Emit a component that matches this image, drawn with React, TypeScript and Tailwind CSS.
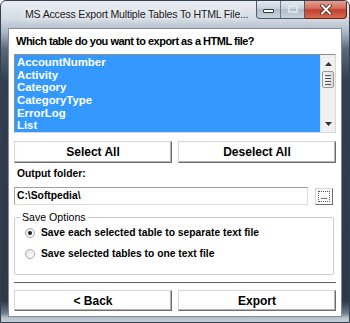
const tables = ["AccountNumber", "Activity", "Category", "CategoryType", "ErrorLog", "List"];

const font = "font-['Liberation_Sans',Arial,sans-serif]";

const WinButton = ({ label, className = "" }: { label: string; className?: string }) => (
  <button
    className={`flex items-center justify-center bg-white border border-[#d6d6d6] border-r-[#6e6e6e] border-b-[#6e6e6e] shadow-[inset_-1px_-1px_0_#b4b4b4] text-[12px] font-bold text-black ${className}`}
  >
    {label}
  </button>
);

const Radio = ({ checked, label }: { checked?: boolean; label: string }) => (
  <div className="flex items-center h-[14px]">
    <span className="ml-[10px] flex h-[10px] w-[10px] items-center justify-center rounded-full border border-[#a9a9a9] bg-gradient-to-br from-[#e6e6e6] to-white">
      {checked && <span className="h-[4px] w-[4px] rounded-full bg-[#222]" />}
    </span>
    <span className="ml-[6px] text-[10.3px] font-bold text-black">{label}</span>
  </div>
);

export default function App() {
  return (
    <div
      className={`${font} relative h-[323px] w-[350px] overflow-hidden rounded-t-[6px] border border-[#34404f] bg-[linear-gradient(to_bottom,#e9eef3_0px,#d3dbe4_18px,#a9b5c3_32px,#5a687a_48px,#323e4d_80px,#2d3947_300px,#6d7a8a_312px,#b9c3ce_317px,#c9d1da_323px)]`}
    >
      {/* title bar */}
      <div className="flex h-[27px] items-start">
        <div className="whitespace-nowrap pl-[24px] pt-[6px] text-[10.6px] tracking-[-0.2px] text-[#1b1b1b] [text-shadow:0_0_6px_#fff,0_0_10px_#fff]">
          MS Access Export Multiple Tables To HTML File...
        </div>
        <div className="ml-auto mr-[2px] flex h-[19px] -mt-px">
          <div className="flex rounded-bl-[4px] border border-t-0 border-[#4d5a6a] bg-[linear-gradient(to_bottom,#e7ecf1,#c6d0db_50%,#aebbc9_51%,#c9d3dd)]">
            <div className="flex w-[24px] items-end justify-center border-r border-[#6d7a8a] pb-[5px]">
              <div className="h-[4px] w-[11px] rounded-[1px] border border-[#303a46] bg-white" />
            </div>
            <div className="flex w-[23px] items-center justify-center">
              <div className="h-[8px] w-[10px] border-[2px] border-[#e4e9ee] opacity-80" />
            </div>
          </div>
          <div className="flex w-[42px] items-center justify-center rounded-br-[4px] border border-l-0 border-t-0 border-[#6b1d17] bg-[linear-gradient(to_bottom,#e8a597,#d3705f_45%,#c2402f_55%,#d66a4f)]">
            <svg width="12" height="11" viewBox="0 0 12 11">
              <path d="M2 1.5 L10 9.5 M10 1.5 L2 9.5" stroke="#3a1510" strokeWidth="3.4" strokeLinecap="square" />
              <path d="M2 1.5 L10 9.5 M10 1.5 L2 9.5" stroke="#fff" strokeWidth="2" strokeLinecap="square" />
            </svg>
          </div>
        </div>
      </div>

      {/* client area */}
      <div className="mx-[7px] h-[289px] border border-[#7f8d9d] bg-white px-[5px]">
        <div className="mt-[5px] h-[14px] whitespace-nowrap pl-[2px] text-[11px] font-bold leading-[14px] tracking-[-0.5px] text-black">
          Which table do you want to export as a HTML file?
        </div>

        <div className="mt-[6px] flex h-[79px] border border-[#8e8e8e] border-r-[#d8d8d8] border-b-[#d8d8d8]">
          <div className="flex-1 bg-[#3399ff] pt-[1px] pl-[2px]">
            {tables.map((t) => (
              <div key={t} className="h-[12.7px] text-[11.4px] font-bold leading-[12.7px] text-white">
                {t}
              </div>
            ))}
          </div>
          <div className="relative w-[15px] bg-[#f0f0f0] border-l border-[#e4e4e4]">
            <svg className="absolute left-[4px] top-[7px]" width="7" height="4" viewBox="0 0 7 4">
              <path d="M0 4 L3.5 0 L7 4 Z" fill="#333" />
            </svg>
            <div className="absolute left-[1px] top-[16px] flex h-[17px] w-[12px] flex-col items-center justify-center gap-[2px] rounded-[2px] border border-[#999] bg-[linear-gradient(to_right,#f4f4f4,#dcdcdc)]">
              <div className="h-px w-[6px] bg-[#555]" />
              <div className="h-px w-[6px] bg-[#555]" />
              <div className="h-px w-[6px] bg-[#555]" />
              <div className="h-px w-[6px] bg-[#555]" />
            </div>
            <svg className="absolute left-[4px] bottom-[6px]" width="7" height="4" viewBox="0 0 7 4">
              <path d="M0 0 L3.5 4 L7 0 Z" fill="#333" />
            </svg>
          </div>
        </div>

        <div className="mt-[8px] flex gap-[6px]">
          <WinButton label="Select All" className="h-[22px] w-[158px]" />
          <WinButton label="Deselect All" className="h-[22px] w-[158px]" />
        </div>

        <div className="mt-[4px] h-[14px] pl-[3px] text-[10.3px] font-bold leading-[14px] text-black">
          Output folder:
        </div>

        <div className="mt-[6px] flex items-center">
          <div className="flex h-[18px] w-[294px] items-center border border-[#a0a0a0] border-r-[#dcdcdc] border-b-[#dcdcdc] pl-[2px] text-[10.3px] font-bold text-black">
            C:\Softpedia\
          </div>
          <div className="ml-[7px] flex h-[17px] w-[18px] items-center justify-center border border-[#d6d6d6] border-r-[#6e6e6e] border-b-[#6e6e6e] bg-white">
            <div className="flex h-[11px] w-[12px] items-end justify-center border border-dotted border-[#555] pb-[1px] text-[8px] font-bold leading-[6px] text-black">
              ...
            </div>
          </div>
        </div>

        <div className="relative mt-[12px] h-[58px] w-[320px] rounded-[2px] border border-[#cdcdcd]">
          <div className="absolute -top-[8px] left-[5px] bg-white px-[2px] text-[10.6px] leading-[14px] text-black">
            Save Options
          </div>
          <div className="pt-[8px]">
            <Radio checked label="Save each selected table to separate text file" />
            <div className="h-[7px]" />
            <Radio label="Save selected tables to one text file" />
          </div>
        </div>

        <div className="mt-[7px] h-[2px] border-t border-[#5d5d5d] border-b border-b-white" />

        <div className="mt-[6px] flex gap-[6px]">
          <WinButton label="< Back" className="h-[21px] w-[158px]" />
          <WinButton label="Export" className="h-[21px] w-[158px]" />
        </div>
      </div>
    </div>
  );
}
